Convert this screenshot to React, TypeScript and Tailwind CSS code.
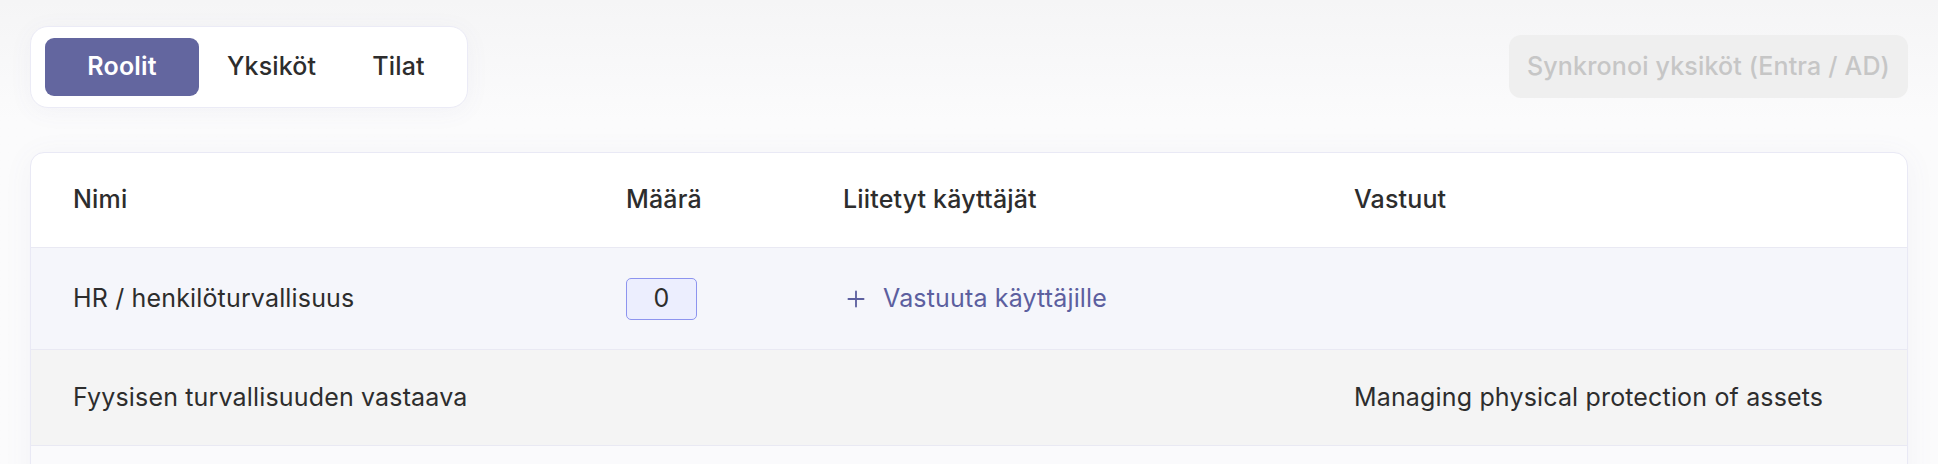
import { Plus } from 'lucide-react';

const tabs = ['Roolit', 'Yksiköt', 'Tilat'];

const rows = [
    { name: 'HR / henkilöturvallisuus', count: 0, responsibilities: '', active: true },
    { name: 'Fyysisen turvallisuuden vastaava', count: null, responsibilities: 'Managing physical protection of assets', active: false },
];

const cols = 'grid grid-cols-[553px_217px_511px_1fr]';

export default function App() {
    return (
        <div className="min-h-screen bg-[#fafafb] bg-gradient-to-b from-[#f5f5f6] to-[#fbfbfc] to-[120px] px-[30px] pt-[26px] font-['Inter',sans-serif] tracking-[0.01em] text-[#2d2d2d]">
            {/* Top bar */}
            <div className="flex items-start justify-between">
                <div className="flex rounded-[18px] border border-[#ebebf6] bg-white py-[11px] pl-[14px] pr-[14px] shadow-[0_4px_24px_rgba(99,102,160,0.05)]">
                    {tabs.map((tab, i) => (
                        <button
                            key={tab}
                            className={
                                i === 0
                                    ? 'h-[58px] min-w-[154px] rounded-[9px] bg-[#63669f] px-[30px] text-[25px] font-semibold text-white'
                                    : 'h-[58px] px-[28px] text-[25px] font-medium text-[#2d2d2d]'
                            }
                        >
                            {tab}
                        </button>
                    ))}
                </div>

                <button
                    disabled
                    className="mt-[9px] h-[63px] w-[399px] rounded-[12px] bg-[#efefef] text-[25px] font-medium text-[#c6c6c6]"
                >
                    Synkronoi yksiköt (Entra / AD)
                </button>
            </div>

            {/* Table card */}
            <div className="mt-[44px] overflow-hidden rounded-[14px] border border-[#e9e9f5] bg-white shadow-[0_4px_30px_rgba(99,102,160,0.06)]">
                <div className={`${cols} h-[95px] items-center border-b border-[#e9e9f3] text-[25px] font-medium`}>
                    <div className="pl-[42px]">Nimi</div>
                    <div className="pl-[42px]">Määrä</div>
                    <div className="pl-[42px]">Liitetyt käyttäjät</div>
                    <div className="pl-[42px]">Vastuut</div>
                </div>

                {rows.map((row) => (
                    <div
                        key={row.name}
                        className={`${cols} items-center border-b border-[#e9e9f3] text-[25px] ${
                            row.active ? 'h-[102px] bg-[#f5f6fb]' : 'h-[96px] bg-[#f4f4f4]'
                        }`}
                    >
                        <div className="pl-[42px]">{row.name}</div>
                        <div className="pl-[42px]">
                            {row.count !== null && (
                                <div className="flex h-[42px] w-[71px] items-center justify-center rounded-[5px] border border-[#8d94ef] bg-[#eceefe]">
                                    {row.count}
                                </div>
                            )}
                        </div>
                        <div className="pl-[42px]">
                            {row.active && (
                                <button className="flex items-center gap-[14px] text-[#5c5f9f]">
                                    <Plus size={26} strokeWidth={1.7} />
                                    Vastuuta käyttäjille
                                </button>
                            )}
                        </div>
                        <div className="pl-[42px]">{row.responsibilities}</div>
                    </div>
                ))}

                {/* next row, below the fold */}
                <div className="h-[96px] bg-[#fafafc]" />
            </div>
        </div>
    );
}
